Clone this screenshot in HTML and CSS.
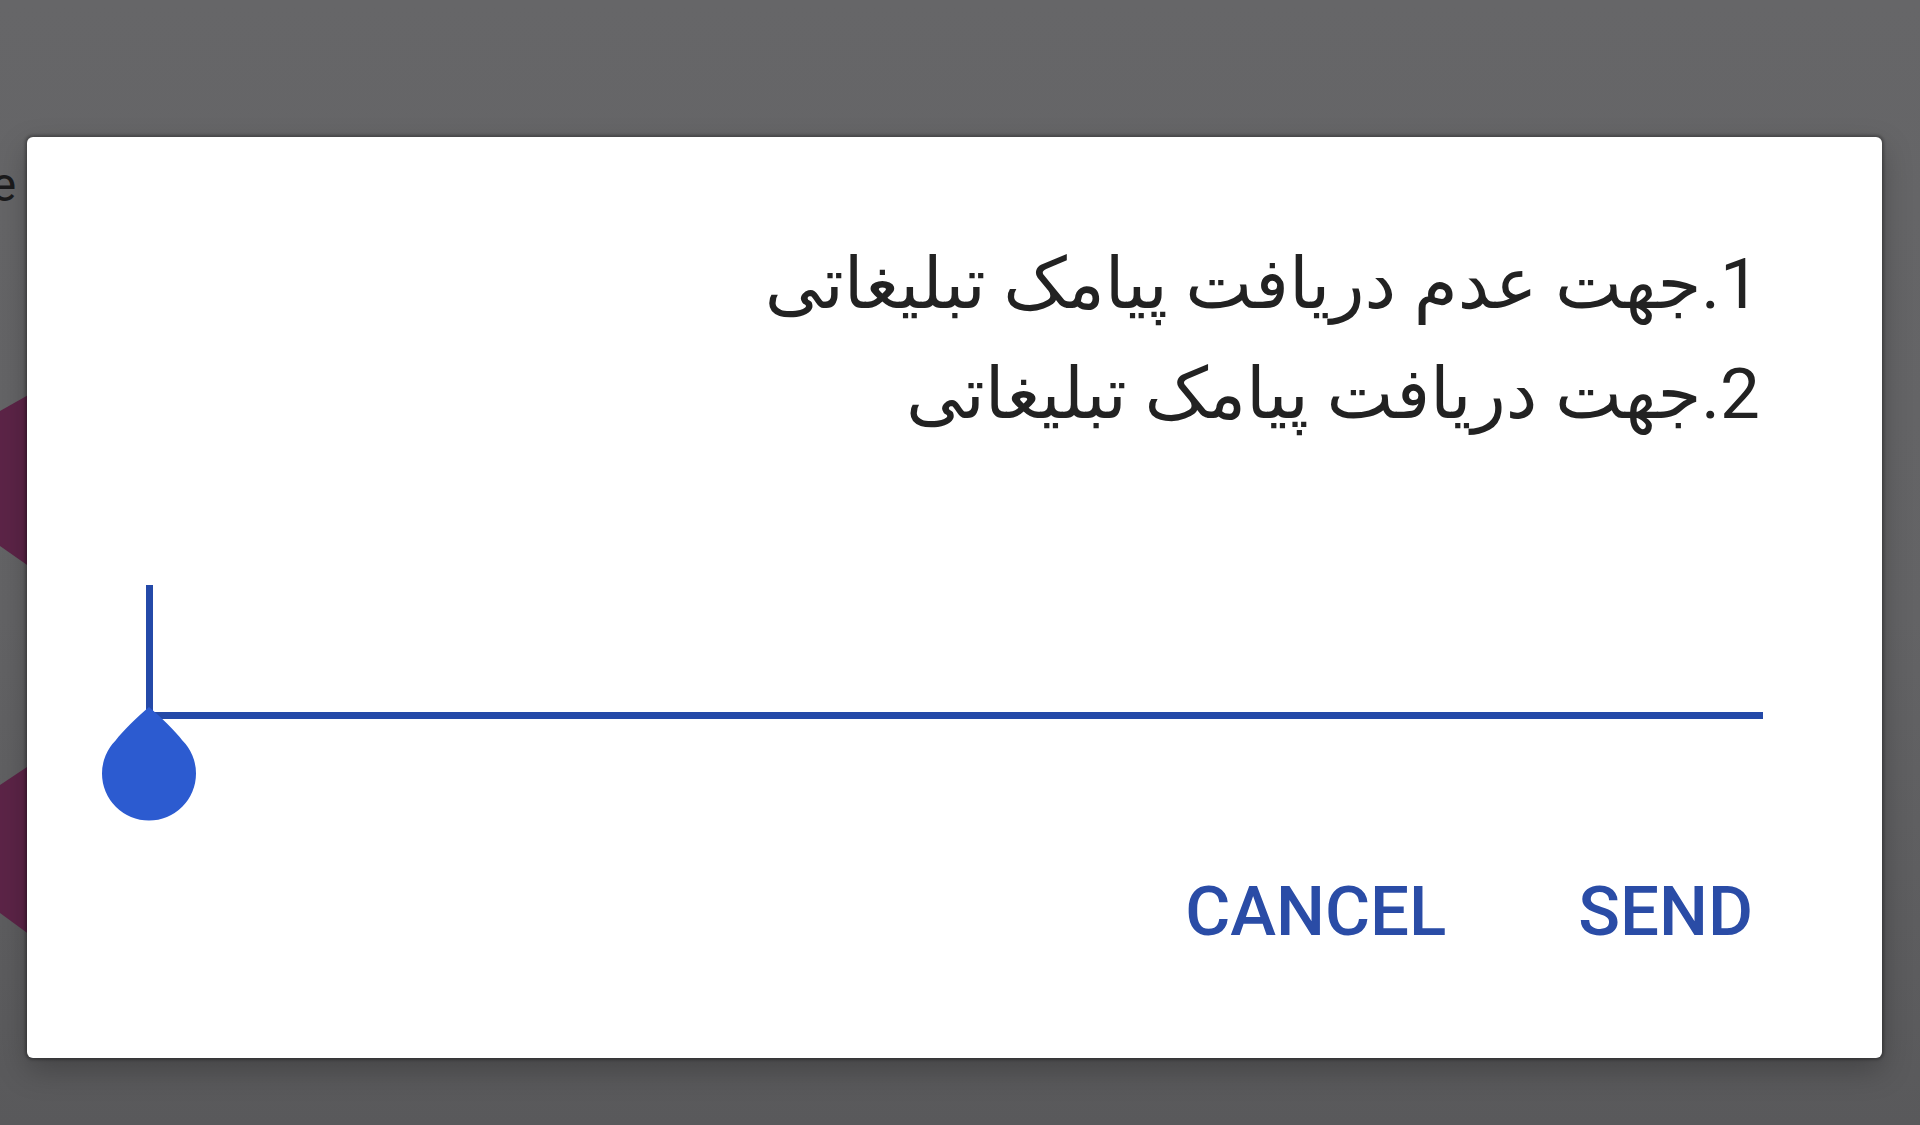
FILE: index.html
```html
<!DOCTYPE html>
<html lang="fa">
<head>
<meta charset="utf-8">
<title>Dialog</title>
<link rel="stylesheet" href="styles.css">
</head>
<body>
<div class="screen">
  <div class="behind">
    <span class="behind-text">re</span>
    <svg class="behind-shapes" width="40" height="1125" viewBox="0 0 40 1125">
      <polygon points="0,411 30,394 30,567 0,546" fill="#5c2447"/>
      <polygon points="0,785 30,765 30,935 0,913" fill="#5c2447"/>
      <ellipse cx="62" cy="1124" rx="22" ry="6" fill="#7a6a3a"/>
    </svg>
  </div>
  <div class="dialog">
    <div class="message" dir="rtl">
      <p class="line">1.جهت عدم دریافت پیامک تبلیغاتی</p>
      <p class="line">2.جهت دریافت پیامک تبلیغاتی</p>
    </div>
    <div class="field">
      <span class="cursor"></span>
      <svg class="handle" width="96" height="116" viewBox="0 0 96 116">
        <path d="M48 0 C 60 10, 75 25, 81.2 33.2 A47 47 0 1 1 14.8 33.2 C 21 25, 36 10, 48 0 Z" fill="#2c5bd0"/>
      </svg>
    </div>
    <div class="actions">
      <button class="btn">CANCEL</button>
      <button class="btn">SEND</button>
    </div>
  </div>
</div>
</body>
</html>
```
FILE: styles.css
```css
html, body {
  margin: 0;
  padding: 0;
}
body {
  width: 1920px;
  height: 1125px;
  overflow: hidden;
  background: linear-gradient(180deg, #666668 0%, #636365 55%, #59595b 100%);
  font-family: Roboto, "DejaVu Sans", sans-serif;
}
.screen {
  position: relative;
  width: 1920px;
  height: 1125px;
  box-sizing: border-box;
  padding: 137px 0 0 27px;
}
.behind {
  position: absolute;
  left: 0;
  top: 0;
  width: 40px;
  height: 1125px;
  overflow: hidden;
}
.behind-text {
  position: absolute;
  left: -25px;
  top: 156px;
  font-family: Roboto, sans-serif;
  font-size: 48px;
  color: #1b1b1c;
}
.behind-shapes {
  position: absolute;
  left: 0;
  top: 0;
  overflow: visible;
}
.dialog {
  position: relative;
  width: 1855px;
  height: 921px;
  background: #ffffff;
  border-radius: 6px;
  box-shadow: 0 0 3px 2px rgba(0, 0, 0, 0.28), 0 12px 30px rgba(0, 0, 0, 0.25);
  display: flex;
  flex-direction: column;
}
.message {
  padding: 92px 122px 0 120px;
  color: #222222;
  font-size: 71px;
  line-height: 110px;
}
.line {
  margin: 0;
  text-align: right;
}
.field {
  position: relative;
  margin: 136px 119px 0 122px;
  height: 127px;
  border-bottom: 7px solid #2449a8;
}
.cursor {
  display: block;
  width: 7px;
  height: 127px;
  margin-left: -3px;
  background: #2449a8;
}
.handle {
  position: absolute;
  left: -48px;
  top: 122px;
}
.actions {
  display: flex;
  justify-content: flex-end;
  gap: 132px;
  margin-top: 158px;
  padding-right: 129px;
}
.btn {
  border: 0;
  background: none;
  padding: 0;
  font-family: Roboto, sans-serif;
  font-weight: 500;
  font-size: 69px;
  line-height: 69px;
  color: #2a4ca6;
}
```
